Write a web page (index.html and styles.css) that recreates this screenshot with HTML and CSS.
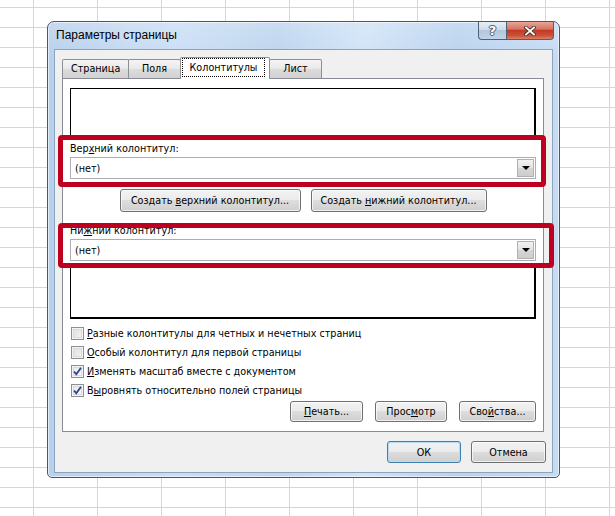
FILE: index.html
```html
<!DOCTYPE html>
<html lang="ru">
<head>
    <meta charset="UTF-8">
    <title>Параметры страницы</title>
    <link rel="stylesheet" href="styles.css">
</head>
<body>
    <div class="desktop">
        <div class="window">
            <div class="titlebar">
                <span class="title">Параметры страницы</span>
                <div class="caption">
                    <span class="help">?</span>
                    <span class="close">
                        <svg width="12" height="10" viewBox="0 0 12 10">
                            <path d="M2 1.5 L10 8.5 M10 1.5 L2 8.5" stroke="#43332f" stroke-width="3.6" stroke-linecap="square"/>
                            <path d="M2 1.5 L10 8.5 M10 1.5 L2 8.5" stroke="#fff" stroke-width="1.8" stroke-linecap="square"/>
                        </svg>
                    </span>
                </div>
            </div>

            <div class="client">
                <div class="tabs">
                    <div class="tab">Страница</div>
                    <div class="tab">Поля</div>
                    <div class="tab active"><span class="focus">Колонтитулы</span></div>
                    <div class="tab">Лист</div>
                </div>

                <div class="panel">
                    <div class="preview"></div>

                    <div class="field">
                        <label>Вер<u>х</u>ний колонтитул:</label>
                        <div class="combo"><span>(нет)</span><span class="arrow"></span></div>
                    </div>

                    <div class="create-row">
                        <button class="btn-create-top">Создать <u>в</u>ерхний колонтитул...</button>
                        <button class="btn-create-bottom">Создать <u>н</u>ижний колонтитул...</button>
                    </div>

                    <div class="field field-footer">
                        <label>Ни<u>ж</u>ний колонтитул:</label>
                        <div class="combo"><span>(нет)</span><span class="arrow"></span></div>
                    </div>

                    <div class="preview preview-footer"></div>

                    <div class="checks">
                        <div class="check"><span class="box"></span><span><u>Р</u>азные колонтитулы для четных и нечетных страниц</span></div>
                        <div class="check"><span class="box"></span><span><u>О</u>собый колонтитул для первой страницы</span></div>
                        <div class="check"><span class="box checked"><svg width="11" height="11" viewBox="0 0 11 11"><path d="M2 5.5 L4.3 8.2 L9 1.8" fill="none" stroke="#2d4a8e" stroke-width="1.9"/></svg></span><span><u>И</u>зменять масштаб вместе с документом</span></div>
                        <div class="check"><span class="box checked"><svg width="11" height="11" viewBox="0 0 11 11"><path d="M2 5.5 L4.3 8.2 L9 1.8" fill="none" stroke="#2d4a8e" stroke-width="1.9"/></svg></span><span>В<u>ы</u>ровнять относительно полей страницы</span></div>
                    </div>

                    <div class="panel-buttons">
                        <button class="btn-print"><u>П</u>ечать...</button>
                        <button class="btn-preview">Прос<u>м</u>отр</button>
                        <button class="btn-props">Сво<u>й</u>ства...</button>
                    </div>
                </div>

                <div class="dialog-buttons">
                    <button class="btn-ok">ОК</button>
                    <button class="btn-cancel">Отмена</button>
                </div>
            </div>

            <!-- red annotation frames -->
            <div class="mark mark-header"></div>
            <div class="mark mark-footer"></div>
        </div>
    </div>
</body>
</html>
```

FILE: styles.css
```css
body {
    margin: 0;
    height: 516px;
    overflow: hidden;
    font-family: "DejaVu Sans Condensed", "DejaVu Sans", sans-serif;
    font-stretch: condensed;
    font-size: 10.7px;
    color: #000;
    background-color: #fff;
    background-image:
        linear-gradient(to right, #d6d6d6 1px, transparent 1px),
        linear-gradient(to bottom, #d6d6d6 1px, transparent 1px);
    background-size: 64px 100%, 100% 20px;
    background-position: 33px 0, 0 7px;
}
.desktop {
    padding: 21px 0 0 47px;
}
.window {
    position: relative;
    box-sizing: border-box;
    width: 513px;
    height: 457px;
    padding: 0 6px 4px 6px;
    display: flex;
    flex-direction: column;
    border: 1px solid #46586c;
    border-radius: 7px 7px 5px 5px;
    background:
        linear-gradient(to bottom, rgba(255,255,255,0.2), rgba(255,255,255,0) 40px),
        linear-gradient(to right, #b7d0ec 0%, #cadef5 25%, #bcd4ee 45%, #d0e3f7 62%, #b9d2ee 80%, #c5dbf4 100%);
    box-shadow: inset 0 0 0 1px rgba(255,255,255,0.6);
}

/* title bar */
.titlebar {
    height: 27px;
    display: flex;
    align-items: flex-start;
}
.title {
    font-family: "Liberation Sans", Arial, sans-serif;
    font-stretch: normal;
    font-size: 12px;
    line-height: 15px;
    padding: 6px 0 0 2px;
}
.caption {
    margin-left: auto;
    margin-right: -1px;
    display: flex;
}
.help, .close {
    box-sizing: border-box;
    height: 18px;
    display: flex;
    align-items: center;
    justify-content: center;
    border: 1px solid #4f6075;
    border-top: none;
}
.help {
    width: 28px;
    border-right: none;
    border-radius: 0 0 0 4px;
    background: linear-gradient(#e6eef7, #cddbea 45%, #b3c6dd 50%, #c3d4e8);
    color: #fff;
    font: bold 13px "DejaVu Sans", sans-serif;
    text-shadow: 0 0 1px #3b4b5e, 1px 0 0 #55667a, -1px 0 0 #55667a, 0 1px 0 #55667a, 0 -1px 0 #55667a;
}
.close {
    width: 48px;
    border-radius: 0 0 4px 0;
    background: linear-gradient(#e9a696, #d77360 42%, #c23a25 50%, #cc513a 80%, #de8066);
}

/* client area */
.client {
    flex: 1;
    display: flex;
    flex-direction: column;
    padding: 7px 8px 9px 7px;
    border: 1px solid #8aa3be;
    background: #f0f0f0;
}
.tabs {
    display: flex;
    align-items: flex-end;
    height: 21px;
}
.tab {
    box-sizing: border-box;
    height: 19px;
    min-width: 53px;
    padding: 0 8px;
    text-align: center;
    line-height: 18px;
    border: 1px solid #8e8f8f;
    border-bottom: none;
    border-radius: 2px 2px 0 0;
    background: linear-gradient(#f4f4f4, #e9e9e9 50%, #dcdcdc 51%, #d2d2d2);
}
.tab:first-child {
    width: 67px;
}
.tab + .tab {
    margin-left: -1px;
}
.tab.active {
    position: relative;
    z-index: 1;
    width: 90px;
    height: 22px;
    margin-bottom: -1px;
    padding: 1px 5px 0 2px;
    background: #fff;
}
.focus {
    display: block;
    line-height: 17px;
    outline: 1px dotted #000;
}

.panel {
    border: 1px solid #898c95;
    background: #fff;
    padding: 9px 7px 9px 7px;
}
.preview {
    box-sizing: border-box;
    height: 50px;
    border: 1px solid #000;
    border-right-width: 2px;
    border-bottom-width: 2px;
}
.preview-footer {
    height: 54px;
    margin-top: 4px;
}
.field {
    margin-top: 4px;
}
.field-footer {
    margin-top: 12px;
}
.field label {
    display: block;
    line-height: 13px;
    margin-bottom: 2px;
}
.combo {
    box-sizing: border-box;
    height: 22px;
    display: flex;
    align-items: center;
    justify-content: space-between;
    padding: 0 1px 0 4px;
    border: 1px solid #abadb3;
    background: #fff;
}
.arrow {
    box-sizing: border-box;
    width: 17px;
    height: 18px;
    border: 1px solid #b1b1b1;
    background: linear-gradient(#f2f2f2, #e3e3e3 50%, #d6d6d6 51%, #cdcdcd);
    position: relative;
}
.arrow::after {
    content: "";
    position: absolute;
    left: 4px;
    top: 6px;
    border-left: 4px solid transparent;
    border-right: 4px solid transparent;
    border-top: 4px solid #000;
}

button {
    box-sizing: border-box;
    height: 23px;
    padding: 0 6px;
    font-family: inherit;
    font-stretch: condensed;
    font-size: 10.7px;
    color: #000;
    border: 1px solid #707070;
    border-radius: 3px;
    background: linear-gradient(#f2f2f2, #ebebeb 48%, #dddddd 50%, #cfcfcf);
    box-shadow: inset 0 0 0 1px rgba(255,255,255,0.7);
}
.create-row {
    display: flex;
    justify-content: center;
    gap: 10px;
    margin-top: 10px;
}
.btn-create-top { width: 181px; }
.btn-create-bottom { width: 176px; }

.checks {
    margin-top: 5px;
}
.check {
    height: 19px;
    display: flex;
    align-items: center;
    gap: 3px;
}
.box {
    box-sizing: border-box;
    width: 13px;
    height: 13px;
    margin-left: 1px;
    display: flex;
    align-items: center;
    justify-content: center;
    border: 1px solid #8e8f8f;
    background: linear-gradient(135deg, #dcdcdc, #f6f6f6);
    box-shadow: inset 0 0 0 1px #f4f4f4, inset 0 0 0 2px #d9d9d9;
}
.box.checked {
    background: linear-gradient(135deg, #e6e6e6, #fbfbfb);
}

.panel-buttons {
    display: flex;
    justify-content: flex-end;
    gap: 12px;
    margin-top: 1px;
}
.panel-buttons button {
    height: 21px;
}
.btn-print { width: 73px; }
.btn-preview { width: 72px; }
.btn-props { width: 77px; }

.dialog-buttons {
    display: flex;
    justify-content: flex-end;
    gap: 10px;
    margin-top: 9px;
    margin-right: -2px;
}
.dialog-buttons button {
    height: 22px;
}
.btn-ok {
    width: 74px;
    border-color: #3c7fb1;
    box-shadow: inset 0 0 0 1px #b7dcf3;
}
.btn-cancel {
    width: 75px;
}

/* red annotation frames over the combos */
.mark {
    position: absolute;
    box-sizing: border-box;
    border: 5px solid #bd0020;
    border-radius: 4px;
}
.mark-header {
    left: 10px;
    top: 113px;
    width: 488px;
    height: 52px;
}
.mark-footer {
    left: 10px;
    top: 201px;
    width: 496px;
    height: 45px;
}
```
